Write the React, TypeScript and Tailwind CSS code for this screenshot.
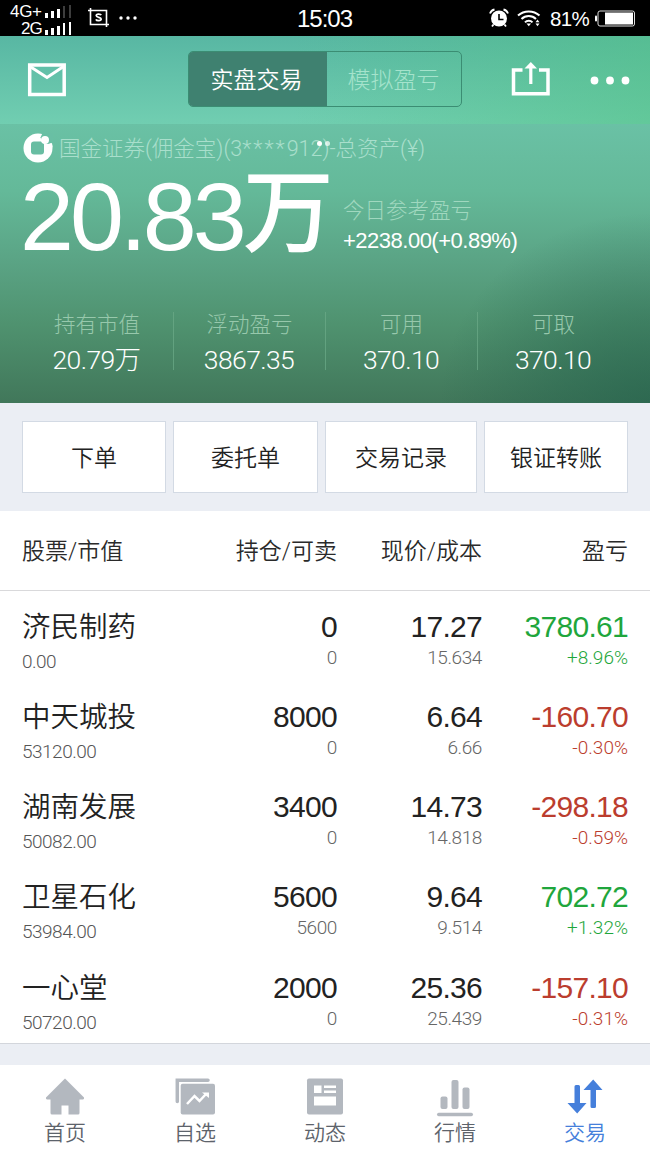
import type { ReactNode } from "react";

type Holding = {
  name: string;
  value: string;
  position: string;
  available: string;
  price: string;
  cost: string;
  profit: string;
  percent: string;
  up: boolean;
};

const holdings: Holding[] = [
  { name: "济民制药", value: "0.00", position: "0", available: "0", price: "17.27", cost: "15.634", profit: "3780.61", percent: "+8.96%", up: true },
  { name: "中天城投", value: "53120.00", position: "8000", available: "0", price: "6.64", cost: "6.66", profit: "-160.70", percent: "-0.30%", up: false },
  { name: "湖南发展", value: "50082.00", position: "3400", available: "0", price: "14.73", cost: "14.818", profit: "-298.18", percent: "-0.59%", up: false },
  { name: "卫星石化", value: "53984.00", position: "5600", available: "5600", price: "9.64", cost: "9.514", profit: "702.72", percent: "+1.32%", up: true },
  { name: "一心堂", value: "50720.00", position: "2000", available: "0", price: "25.36", cost: "25.439", profit: "-157.10", percent: "-0.31%", up: false },
];

const stats = [
  { label: "持有市值", value: "20.79万" },
  { label: "浮动盈亏", value: "3867.35" },
  { label: "可用", value: "370.10" },
  { label: "可取", value: "370.10" },
];

function Signal({ bars }: { bars: number }) {
  return (
    <svg width="27" height="13" viewBox="0 0 27 13" className="shrink-0">
      {[5, 7, 9, 12, 13].map((h, i) => (
        <rect key={i} x={i * 6} y={13 - h} width={i > 2 ? 2 : 3} height={h} fill={i < bars ? "#fff" : "#3d3d3d"} />
      ))}
    </svg>
  );
}

function StatusBar() {
  return (
    <div className="flex h-9 items-center bg-black text-white">
      <div className="w-[72px] pt-1">
        <div className="flex h-[17px] items-center pl-[10px]">
          <span className="w-[35px] text-[17px] leading-[17px] tracking-[-0.3px]">4G+</span>
          <Signal bars={3} />
        </div>
        <div className="flex h-[17px] items-center pl-[21px]">
          <span className="w-[24px] text-[17px] leading-[17px] tracking-[-1px]">2G</span>
          <Signal bars={5} />
        </div>
      </div>
      <svg width="22" height="20" viewBox="0 0 22 20" fill="none" stroke="#fff" strokeWidth="1.6" className="ml-[15px]">
        <path d="M1 2.5h18.5V19M3.5 0v16.5H22" />
        <path d="M14.2 7.1c-.6-1.4-5-1.6-5 .5 0 2.300 5 1.200 5 3.500 0 2.200-4.700 2-5.300.3" strokeWidth="1.700" />
      </svg>
      <svg width="18" height="4" viewBox="0 0 18 4" fill="#fff" className="ml-[10px]">
        <circle cx="2" cy="2" r="1.700" />
        <circle cx="9" cy="2" r="1.700" />
        <circle cx="16" cy="2" r="1.700" />
      </svg>
      <span className="ml-[160px] w-[60px] pt-0.5 text-[24px] leading-7 tracking-[-1px]">15:03</span>
      <svg width="20" height="20" viewBox="0 0 20 20" className="ml-[132px]">
        <circle cx="10" cy="10.500" r="8" fill="#fff" />
        <path d="M1 5.500a6 6 0 0 1 4.500-4M19 5.500a6 6 0 0 0-4.500-4" fill="none" stroke="#fff" strokeWidth="1.800" />
        <path d="M10 6v5.500h4.500" fill="none" stroke="#000" strokeWidth="1.600" />
        <path d="M4.500 16.500l-1.500 2M15.500 16.500l1.500 2" stroke="#fff" strokeWidth="1.800" />
      </svg>
      <svg width="24" height="17" viewBox="0 0 24 17" fill="none" stroke="#fff" strokeWidth="2" className="ml-2">
        <path d="M1 5.500c6-5.500 15.500-5.500 21.500 0M4.500 9c4-4 10.500-4 14.500 0M8 12.300c2-2.200 5.500-2.200 7.500 0" />
        <path d="M9.500 13.500h4.500l-2.200 2.700z" fill="#fff" stroke="none" />
        <path d="M18.500 12.200l2-2.700 2 2.700zM18.500 13.500h4l-2 2.700z" fill="#fff" stroke="none" />
      </svg>
      <span className="ml-[9px] w-[42px] pt-0.5 text-[20.500px] leading-6 tracking-[-0.700px]">81%</span>
      <svg width="41" height="17" viewBox="0 0 41 17" className="ml-[3px]">
        <rect x="0" y="5.500" width="2" height="6" rx="1" fill="#fff" />
        <rect x="3" y="1" width="36.500" height="15" rx="2" fill="none" stroke="#ddd" />
        <rect x="10" y="2.500" width="28" height="12" fill="#fff" />
      </svg>
    </div>
  );
}

function TopBar() {
  return (
    <div className="flex h-[88px] items-center bg-[linear-gradient(90deg,#54c38400_45%,#54c38480_100%),linear-gradient(180deg,#58b7a3_0%,#71ceb1_100%)] text-white">
      <svg width="39" height="34" viewBox="0 0 39 34" fill="none" stroke="#fff" strokeWidth="3.500" className="ml-[27px]">
        <rect x="2.700" y="2" width="34.500" height="29.500" />
        <path d="M3 3.500l17 11L36.500 3.500" strokeWidth="3" />
      </svg>
      <div className="mt-[-2px] ml-[122px] flex h-[56px] w-[274px] overflow-hidden rounded-[5px] border border-[#3b8d73] text-[23px]">
        <div className="flex w-[138px] items-center justify-center bg-[#3f8170] pt-[3px] pr-[3px] font-[350]">实盘交易</div>
        <div className="flex flex-1 items-center justify-center pt-[3px] pr-px font-light text-[#a5e3cc]">模拟盈亏</div>
      </div>
      <svg width="40" height="36" viewBox="0 0 40 36" fill="none" stroke="#fff" strokeWidth="3.500" className="mt-[-2px] ml-[49px]">
        <path d="M11.500 9H2.500v23.700h34.500V9h-9" />
        <path d="M19.800 23V5" strokeWidth="3.200" />
        <path d="M13.500 7.500L19.800 1l6.200 6.500z" fill="#fff" stroke="none" />
      </svg>
      <svg width="40" height="9" viewBox="0 0 40 9" fill="#fff" className="ml-[39px]">
        <circle cx="4.500" cy="4.500" r="3.900" />
        <circle cx="20" cy="4.500" r="3.900" />
        <circle cx="35.500" cy="4.500" r="3.900" />
      </svg>
    </div>
  );
}

function Summary() {
  return (
    <div className="h-[279px] bg-[radial-gradient(ellipse_210px_190px_at_100%_100%,#22604ba0_0%,#22604b60_45%,#22604b00_100%),linear-gradient(180deg,#6ac1a5_0%,#64b999_24%,#5aa384_50%,#4f926f_72%,#41775a_100%)] text-white">
      <div className="relative flex h-12 items-center pl-[23px]">
        <svg width="30" height="30" viewBox="0 0 30 30">
          <circle cx="15" cy="15" r="14.500" fill="#fff" />
          <rect x="8" y="8.500" width="13" height="13" rx="3" fill="#68bda2" />
          <path d="M17.500 4.500L19.500 0H30v9.500l-5 1.500-5-1z" fill="#69bfa4" />
          <circle cx="22" cy="7" r="4" fill="#fff" />
          <path d="M25 11.500l4-1.200.5 4-4 .5z" fill="#fff" />
        </svg>
        <span className="ml-[6px] pt-0.5 font-['Roboto','Noto_Sans_CJK_SC',sans-serif] text-[21.500px] leading-8 font-light whitespace-nowrap text-[#a9dfcc]">
          国金证券(佣金宝)(3<span className="tracking-[2px]">****</span>912)-总资产(¥)
        </span>
        <i className="absolute top-[17px] left-[317px] size-[5px] rounded-full bg-white" />
        <i className="absolute top-[17px] left-[325px] size-[5px] rounded-full bg-white/70" />
      </div>
      <div className="flex h-[84px]">
        <div className="flex w-[343px] items-center pt-[5px] pl-[20px] whitespace-nowrap">
          <span className="text-[97px] leading-[84px] tracking-[-4px]">20.83</span>
          <span className="mt-[-6px] text-[91px] leading-[84px] font-medium">万</span>
        </div>
        <div className="pt-[25px]">
          <div className="text-[21.500px] leading-[28px] font-light text-[#a0d8bf]">今日参考盈亏</div>
          <div className="mt-[2px] text-[22px] leading-[28px] tracking-[-0.500px]">+2238.00(+0.89%)</div>
        </div>
      </div>
      <div className="mt-[56px] flex h-[58px] pr-[21px] pl-[21px]">
        {stats.map((s, i) => (
          <div key={s.label} className={i > 0 ? "w-[152px] border-l border-[#6cab89]/70 text-center" : "w-[152px] text-center"}>
            <div className="text-[21.500px] leading-[26px] font-light text-[#97c8ac]">{s.label}</div>
            <div className="mt-[7px] pr-px font-['Roboto','Noto_Sans_CJK_SC',sans-serif] text-[26.500px] leading-[30px] font-light tracking-[-0.600px]">{s.value}</div>
          </div>
        ))}
      </div>
    </div>
  );
}

function ActionButton({ children, className }: { children: ReactNode; className: string }) {
  return (
    <button className={`h-[72px] border border-[#d3dae4] bg-white pt-[2px] text-[23px] font-[350] text-[#222] ${className}`}>
      {children}
    </button>
  );
}

function HoldingRow({ h }: { h: Holding }) {
  const color = h.up ? "text-[#1fa63c]" : "text-[#bb3d2e]";
  const main = "text-[30px] leading-[36px] tracking-[-0.700px]";
  const sub = "font-['Roboto','Noto_Sans_CJK_SC',sans-serif] text-[19px] leading-[24px] font-light";
  return (
    <div className="flex h-[90.250px] pt-[17.500px] pr-[22px] pl-[22px] text-right text-[#222]">
      <div className="w-[165px] text-left">
        <div className="text-[28.500px] leading-[36px] font-[350]">{h.name}</div>
        <div className={`${sub} mt-[5px] tracking-[-0.500px] text-[#555]`}>{h.value}</div>
      </div>
      <div className="w-[150px]">
        <div className={main}>{h.position}</div>
        <div className={`${sub} pt-px tracking-[-0.400px] text-[#666]`}>{h.available}</div>
      </div>
      <div className="w-[145px]">
        <div className={main}>{h.price}</div>
        <div className={`${sub} pt-px tracking-[-0.400px] text-[#666]`}>{h.cost}</div>
      </div>
      <div className={`w-[146px] ${color}`}>
        <div className={main}>{h.profit}</div>
        <div className={`${sub} pt-px`}>{h.percent}</div>
      </div>
    </div>
  );
}

const tabs: { label: string; icon: ReactNode }[] = [
  {
    label: "首页",
    icon: (
      <path d="M20 1.500L39 20.500q.5 2-2 2H34.500V36q0 1.500-1.500 1.500H23.500V28.500h-7v9H7Q5.500 37.500 5.500 36V22.500H3q-2.500 0-2-2z" fill="currentColor" />
    ),
  },
  {
    label: "自选",
    icon: (
      <>
        <path d="M2.300 24.500V3.200H33" fill="none" stroke="currentColor" strokeWidth="3.500" strokeLinecap="round" />
        <rect x="5.700" y="6.700" width="34.300" height="30.800" rx="2" fill="currentColor" />
        <path d="M12 27l7.500-8 5 5 7-7.500" fill="none" stroke="#fff" strokeWidth="2.500" />
        <path d="M27 15.500h7V21z" fill="#fff" />
      </>
    ),
  },
  {
    label: "动态",
    icon: (
      <>
        <rect x="2" y="1.500" width="36" height="36" rx="2" fill="currentColor" />
        <path d="M9 8.500h7.500V16H9zM19 8.500h12V11H19zM19 13.500h12V16H19zM9 19.500h22v9H9z" fill="#fff" />
      </>
    ),
  },
  {
    label: "行情",
    icon: (
      <g fill="currentColor">
        <rect x="5.500" y="19.500" width="7" height="12.500" rx="2" />
        <rect x="16.500" y="3" width="7" height="29" rx="2" />
        <rect x="27.500" y="10.500" width="7" height="21.500" rx="2" />
        <rect x="2" y="35.700" width="36" height="3.500" rx="1.700" />
      </g>
    ),
  },
  {
    label: "交易",
    icon: (
      <g fill="currentColor">
        <path d="M9.500 9.500q0-1.500 1.500-1.500h2.500q1.500 0 1.500 1.500V26H21.500L12.200 36.500 2.500 26h7z" />
        <path d="M25.500 29.500q0 1.500 1.500 1.500h2.500q1.500 0 1.500-1.500V13H37.500L28.200 2.500 18.500 13h7z" />
      </g>
    ),
  },
];

export default function App() {
  return (
    <div className="h-[1156px] w-[650px] overflow-hidden bg-white font-['Liberation_Sans','Noto_Sans_CJK_SC',sans-serif]">
      <StatusBar />
      <TopBar />
      <Summary />

      {/* Actions */}
      <div className="flex h-[108px] gap-[7px] bg-[#ebeef4] px-[22px] pt-[18px]">
        <ActionButton className="w-[144px]">下单</ActionButton>
        <ActionButton className="w-[145px]">委托单</ActionButton>
        <ActionButton className="w-[152px]">交易记录</ActionButton>
        <ActionButton className="w-[144px]">银证转账</ActionButton>
      </div>

      {/* Holdings */}
      <div className="flex h-[80px] items-center border-b border-[#d9d9db] px-[22px] pt-[4px] text-right font-['Roboto','Noto_Sans_CJK_SC',sans-serif] text-[23px] font-[350] text-[#2a2a2a]">
        <div className="w-[165px] text-left">股票/市值</div>
        <div className="w-[150px]">持仓/可卖</div>
        <div className="w-[145px]">现价/成本</div>
        <div className="w-[146px]">盈亏</div>
      </div>
      <div className="h-[452px]">
        {holdings.map((h) => (
          <HoldingRow key={h.name} h={h} />
        ))}
      </div>
      <div className="h-[22px] border-t border-[#d3d6dc] bg-[#ebeef4]" />

      {/* Tab bar */}
      <div className="flex h-[91px] bg-white">
        {tabs.map((tab, i) => (
          <div key={tab.label} className={i === 4 ? "flex w-[130px] flex-col items-center pt-[12px] text-[#457fdb]" : "flex w-[130px] flex-col items-center pt-[12px] text-[#b3b8bf]"}>
            <svg width="40" height="40" viewBox="0 0 40 40">
              {tab.icon}
            </svg>
            <span className={i === 4 ? "mt-[2px] text-[21px] leading-[28px] font-[350]" : "mt-[2px] text-[21px] leading-[28px] font-[350] text-[#5d636b]"}>
              {tab.label}
            </span>
          </div>
        ))}
      </div>
    </div>
  );
}
